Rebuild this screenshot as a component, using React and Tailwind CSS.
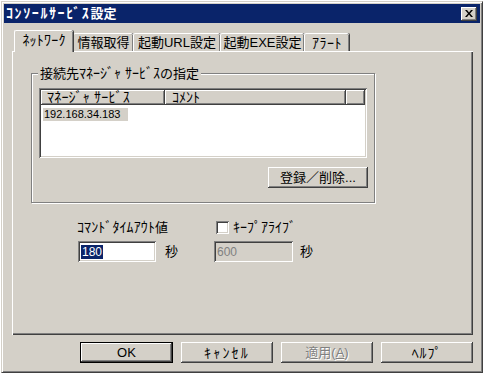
import React from "react";

const FONT = { fontFamily: '"Liberation Sans", "Noto Sans CJK JP", sans-serif' };

const raised =
  "shadow-[inset_-1px_-1px_#404040,inset_1px_1px_#ffffff,inset_-2px_-2px_#808080,inset_2px_2px_#d4d0c8]";
const sunken =
  "shadow-[inset_1px_1px_#808080,inset_-1px_-1px_#ffffff,inset_2px_2px_#404040,inset_-2px_-2px_#d4d0c8]";

function K({ children, t = "" }) {
  return <span className={`text-[14px] leading-[14px] ${t}`}>{children}</span>;
}

function Btn({ children, w, def, disabled }) {
  return (
    <div
      className={`h-[21px] flex items-center justify-center bg-[#d4d0c8] text-[13px] leading-[14px] ${
        def ? "border border-black" : ""
      } ${raised} ${disabled ? "text-[#808080] [text-shadow:1px_1px_#ffffff]" : "text-black"}`}
      style={{ width: w }}
    >
      {children}
    </div>
  );
}

function Tab({ children, w, active }) {
  return (
    <div
      className={`flex items-center justify-center bg-[#d4d0c8] border-t border-l border-white rounded-t-[2px] shadow-[inset_-1px_0_#808080,1px_0_#404040] text-[13px] leading-[14px] text-black ${
        active ? "h-[22px] relative z-10 -mb-[1px] pb-[3px]" : "h-[18px] pt-[1px]"
      }`}
      style={{ width: w }}
    >
      {children}
    </div>
  );
}

export default function App() {
  return (
    <div className="w-[487px] h-[376px] bg-white pt-[1px] pl-[1px]" style={FONT}>
      <div className="w-[482px] h-[372px] bg-[#d4d0c8] border border-t-[#d4d0c8] border-l-[#d4d0c8] border-r-[#404040] border-b-[#404040] shadow-[inset_1px_1px_#ffffff,inset_-1px_-1px_#808080] p-[2px] flex flex-col">
        {/* title bar */}
        <div className="h-[19px] bg-[#0a246a] flex items-center justify-between pl-[2px] pr-[3px]">
          <span className="text-white font-bold text-[13px] leading-[15px]">
            <span className="text-[14px] tracking-[1.6px]">ｺﾝｿｰﾙｻｰﾋﾞｽ</span>設定
          </span>
          <div className={`w-[16px] h-[14px] bg-[#d4d0c8] flex items-center justify-center ${raised}`}>
            <svg width="8" height="7" viewBox="0 0 8 7">
              <path d="M0 0h2l2 2.5L6 0h2L5 3.5L8 7H6L4 4.5L2 7H0l3-3.5z" fill="#000" />
            </svg>
          </div>
        </div>

        {/* tab strip */}
        <div className="mt-[7px] ml-[10px] h-[21px] flex items-end">
          <Tab w={59} active>
            <K t="tracking-[0.2px]">ﾈｯﾄﾜｰｸ</K>
          </Tab>
          <Tab w={60}>情報取得</Tab>
          <Tab w={87}>起動URL設定</Tab>
          <Tab w={84}>起動EXE設定</Tab>
          <Tab w={45}>
            <K t="tracking-[0.5px]">ｱﾗｰﾄ</K>
          </Tab>
        </div>

        {/* tab panel */}
        <div className="ml-[8px] w-[461px] h-[284px] shadow-[inset_1px_1px_#ffffff,inset_-1px_-1px_#404040,inset_-2px_-2px_#808080] pl-[19px] pt-[22px] flex flex-col">
          {/* group box */}
          <div className="relative w-[344px] h-[130px] border border-[#808080] shadow-[inset_1px_1px_#ffffff,1px_1px_#ffffff] pl-[7px] pt-[14px]">
            <span className="absolute left-[6px] -top-[8px] px-[2px] bg-[#d4d0c8] text-[13px] leading-[14px] text-black">
              接続先<K>ﾏﾈｰｼﾞｬ ｻｰﾋﾞｽ</K>の指定
            </span>
            {/* list view */}
            <div className={`w-[328px] h-[70px] bg-white p-[2px] ${sunken}`}>
              <div className="flex h-[15px] bg-[#d4d0c8]">
                <div className={`w-[124px] h-full flex items-center pl-[6px] text-[14px] leading-[13px] tracking-[0.2px] ${raised}`}>ﾏﾈｰｼﾞｬ ｻｰﾋﾞｽ</div>
                <div className={`w-[181px] h-full flex items-center pl-[7px] text-[14px] leading-[13px] ${raised}`}>ｺﾒﾝﾄ</div>
                <div className={`flex-1 h-full ${raised}`}></div>
              </div>
              <div className="mt-[3px] ml-[2px] flex">
                <span className="bg-[#d4d0c8] pl-[1px] pr-[8px] text-[11px] leading-[13px] text-black">192.168.34.183</span>
              </div>
            </div>
            <div className="mt-[9px] ml-[229px]">
              <Btn w={100}>
                <span className="h-[24px] flex items-center">登録／削除...</span>
              </Btn>
            </div>
          </div>

          {/* timeout row */}
          <div className="mt-[17px] ml-[46px] flex">
            <div className="w-[137px] flex flex-col">
              <span className="text-[13px] leading-[14px] h-[14px] text-black">
                <K t="tracking-[0.1px]">ｺﾏﾝﾄﾞﾀｲﾑｱｳﾄ</K>値
              </span>
              <div className="mt-[7px] flex items-center">
                <div className={`ml-[1px] w-[78px] h-[21px] bg-white flex items-center pl-[3px] ${sunken}`}>
                  <span className="bg-[#0a246a] text-white text-[12px] leading-[14px] px-[1px]">180</span>
                </div>
                <span className="ml-[9px] text-[13px] leading-[14px] text-black">秒</span>
              </div>
            </div>
            <div className="flex flex-col">
              <div className="flex items-center h-[14px]">
                <div className={`ml-[2px] w-[13px] h-[13px] bg-white ${sunken}`}></div>
                <span className="ml-[4px] text-[14px] leading-[14px] text-black">ｷｰﾌﾟｱﾗｲﾌﾞ</span>
              </div>
              <div className="mt-[7px] flex items-center">
                <div className={`w-[79px] h-[21px] bg-[#d4d0c8] flex items-center pl-[3px] ${sunken}`}>
                  <span className="text-[#808080] text-[12px] leading-[14px]">600</span>
                </div>
                <span className="ml-[7px] text-[13px] leading-[14px] text-black">秒</span>
              </div>
            </div>
          </div>
        </div>

        {/* bottom buttons */}
        <div className="mt-[7px] mr-[7px] flex justify-end gap-[8px]">
          <Btn w={93} def>OK</Btn>
          <Btn w={92}>
            <K t="tracking-[2.2px]">ｷｬﾝｾﾙ</K>
          </Btn>
          <Btn w={92} disabled>
            適用(<u>A</u>)
          </Btn>
          <Btn w={92}>
            <K t="tracking-[0.8px]">ﾍﾙﾌﾟ</K>
          </Btn>
        </div>
      </div>
    </div>
  );
}
